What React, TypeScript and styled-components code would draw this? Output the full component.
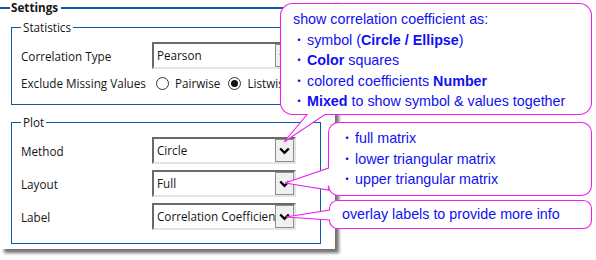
import React from "react";
import styled, { createGlobalStyle } from "styled-components";

const GlobalStyle = createGlobalStyle`
    body {
        margin: 0;
        background: #ffffff;
    }
`;

const Page = styled.div`
    position: relative;
    width: 596px;
    height: 260px;
    overflow: hidden;
    background: #ffffff;
    font-family: "Open Sans", "Noto Sans", sans-serif;
    font-size: 11.7px;
    color: #161616;
`;

const Panel = styled.div`
    width: 335px;
    height: 249px;
    background: #ffffff;
    box-shadow: 4px 4px 3px rgba(0, 0, 0, 0.55);
`;

const Settings = styled.fieldset`
    margin: 0;
    padding: 5px 14px 0 11px;
    border: none;
    border-top: 2px solid #0d5aa6;
    min-width: 0;
`;

const SettingsLegend = styled.legend`
    margin-left: -1px;
    padding: 0 3px 0 1px;
    font-weight: 700;
    line-height: 15px;
`;

const Group = styled.fieldset<{ $top?: number }>`
    margin: ${(p) => p.$top || 0}px 0 0 0;
    padding: 7px 0 13px 9px;
    width: 310px;
    box-sizing: border-box;
    border: 1px solid #0d5aa6;
    min-width: 0;
`;

const GroupLegend = styled.legend`
    padding: 0 2px;
    line-height: 15px;
`;

const Rows = styled.div`
    display: flex;
    flex-direction: column;
    gap: 6px;
`;

const Row = styled.div`
    display: grid;
    grid-template-columns: 131px auto;
    align-items: center;
`;

const Combo = styled.div`
    display: flex;
    width: 144px;
    height: 27px;
    box-sizing: border-box;
    border-style: solid;
    border-width: 2px;
    border-color: #696969 #e4e4e4 #e4e4e4 #696969;
    background: #ffffff;
`;

const ComboText = styled.div`
    flex: 1;
    padding-left: 3px;
    line-height: 23px;
    white-space: nowrap;
    overflow: hidden;
`;

const DropButton = styled.div`
    width: 19px;
    box-sizing: border-box;
    border: 1px solid #8d8d8d;
    background: #f0f0f0;
    display: flex;
    align-items: center;
    justify-content: center;
`;

const RadioRow = styled.div`
    display: flex;
    align-items: center;
    height: 16px;
    padding-left: 4px;
`;

const RadioCircle = styled.span<{ $checked?: boolean }>`
    width: 13px;
    height: 13px;
    box-sizing: border-box;
    border: 1px solid #333333;
    border-radius: 50%;
    display: flex;
    align-items: center;
    justify-content: center;
    margin-right: 6px;

    &::after {
        content: "";
        width: 7px;
        height: 7px;
        border-radius: 50%;
        background: ${(p) => (p.$checked ? "#111111" : "transparent")};
    }
`;

const RadioLabel = styled.span`
    margin-right: 8px;
    white-space: nowrap;
`;

const CalloutBox = styled.div<{ $x: number; $y: number; $w: number; $h: number }>`
    position: absolute;
    left: ${(p) => p.$x}px;
    top: ${(p) => p.$y}px;
    width: ${(p) => p.$w}px;
    height: ${(p) => p.$h}px;
    box-sizing: border-box;
`;

const CalloutShape = styled.svg`
    position: absolute;
    left: 0;
    top: 0;
    overflow: visible;
`;

const CalloutText = styled.div<{ $pad: string; $center?: boolean }>`
    position: relative;
    height: 100%;
    box-sizing: border-box;
    padding: ${(p) => p.$pad};
    display: flex;
    flex-direction: column;
    justify-content: ${(p) => (p.$center ? "center" : "flex-start")};
    font-family: "Liberation Sans", Arial, sans-serif;
    font-size: 14.3px;
    line-height: 19.6px;
    color: #1010f2;
    white-space: nowrap;

    b {
        font-weight: 700;
    }
`;

const Bullet = styled.span`
    font-family: "Noto Sans CJK JP", sans-serif;
    font-size: 12px;
    display: inline-block;
    width: 14px;
`;

type Tail = { side: "bottom" | "left"; a: number; b: number; tx: number; ty: number };

const calloutPath = (w: number, h: number, r: number, t: Tail) => {
    const L = 0.5;
    const T = 0.5;
    const R = w - 0.5;
    const B = h - 0.5;
    const arc = (x: number, y: number) => `A${r},${r} 0 0 1 ${x},${y}`;
    if (t.side === "bottom") {
        return `M${L + r},${T} H${R - r} ${arc(R, T + r)} V${B - r} ${arc(R - r, B)} H${t.b} L${t.tx},${t.ty} L${t.a},${B} H${L + r} ${arc(L, B - r)} V${T + r} ${arc(L + r, T)} Z`;
    }
    return `M${L + r},${T} H${R - r} ${arc(R, T + r)} V${B - r} ${arc(R - r, B)} H${L + r} ${arc(L, B - r)} V${t.b} L${t.tx},${t.ty} L${L},${t.a} V${T + r} ${arc(L + r, T)} Z`;
};

type CalloutProps = {
    x: number;
    y: number;
    w: number;
    h: number;
    r: number;
    tail: Tail;
    pad: string;
    center?: boolean;
    children: React.ReactNode;
};

const Callout = (props: CalloutProps) => (
    <CalloutBox $x={props.x} $y={props.y} $w={props.w} $h={props.h}>
        <CalloutShape width={props.w} height={props.h}>
            <path
                d={calloutPath(props.w, props.h, props.r, props.tail)}
                fill="#ffffff"
                stroke="#f01ef0"
                strokeWidth={1.1}
            />
        </CalloutShape>
        <CalloutText $pad={props.pad} $center={props.center}>
            {props.children}
        </CalloutText>
    </CalloutBox>
);

const Chevron = () => (
    <svg width="11" height="8" viewBox="0 0 11 8">
        <path d="M1.2 1.5 L5.5 5.8 L9.8 1.5" fill="none" stroke="#000" strokeWidth="2.3" />
    </svg>
);

const ComboBox = ({ value }: { value: string }) => (
    <Combo>
        <ComboText>{value}</ComboText>
        <DropButton>
            <Chevron />
        </DropButton>
    </Combo>
);

const App = () => {
    return (
        <Page>
            <GlobalStyle />
            <Panel>
                <Settings>
                    <SettingsLegend>Settings</SettingsLegend>
                    <Group>
                        <GroupLegend>Statistics</GroupLegend>
                        <Rows>
                            <Row>
                                <span>Correlation Type</span>
                                <ComboBox value="Pearson" />
                            </Row>
                            <Row>
                                <span>Exclude Missing Values</span>
                                <RadioRow>
                                    <RadioCircle />
                                    <RadioLabel>Pairwise</RadioLabel>
                                    <RadioCircle $checked />
                                    <RadioLabel>Listwise</RadioLabel>
                                </RadioRow>
                            </Row>
                        </Rows>
                    </Group>
                    <Group $top={10}>
                        <GroupLegend>Plot</GroupLegend>
                        <Rows>
                            <Row>
                                <span>Method</span>
                                <ComboBox value="Circle" />
                            </Row>
                            <Row>
                                <span>Layout</span>
                                <ComboBox value="Full" />
                            </Row>
                            <Row>
                                <span>Label</span>
                                <ComboBox value="Correlation Coefficient" />
                            </Row>
                        </Rows>
                    </Group>
                </Settings>
            </Panel>

            <Callout
                x={280}
                y={3}
                w={312}
                h={112}
                r={12}
                pad="7px 0 0 13px"
                tail={{ side: "bottom", a: 27, b: 45, tx: 4, ty: 139 }}
            >
                <span>show correlation coefficient as:</span>
                <span>
                    <Bullet>・</Bullet>symbol (<b>Circle / Ellipse</b>)
                </span>
                <span>
                    <Bullet>・</Bullet>
                    <b>Color</b> squares
                </span>
                <span>
                    <Bullet>・</Bullet>colored coefficients <b>Number</b>
                </span>
                <span>
                    <Bullet>・</Bullet>
                    <b>Mixed</b> to show symbol &amp; values together
                </span>
            </Callout>

            <Callout
                x={328}
                y={122}
                w={264}
                h={74}
                r={10}
                pad="6px 0 0 13px"
                tail={{ side: "left", a: 46, b: 68, tx: -43, ty: 61 }}
            >
                <span>
                    <Bullet>・</Bullet>full matrix
                </span>
                <span>
                    <Bullet>・</Bullet>lower triangular matrix
                </span>
                <span>
                    <Bullet>・</Bullet>upper triangular matrix
                </span>
            </Callout>

            <Callout
                x={329}
                y={200}
                w={263}
                h={29}
                r={8}
                pad="0 0 0 13px"
                center
                tail={{ side: "left", a: 10, b: 20, tx: -43, ty: 17 }}
            >
                <span>overlay labels to provide more info</span>
            </Callout>
        </Page>
    );
};

export default App;
